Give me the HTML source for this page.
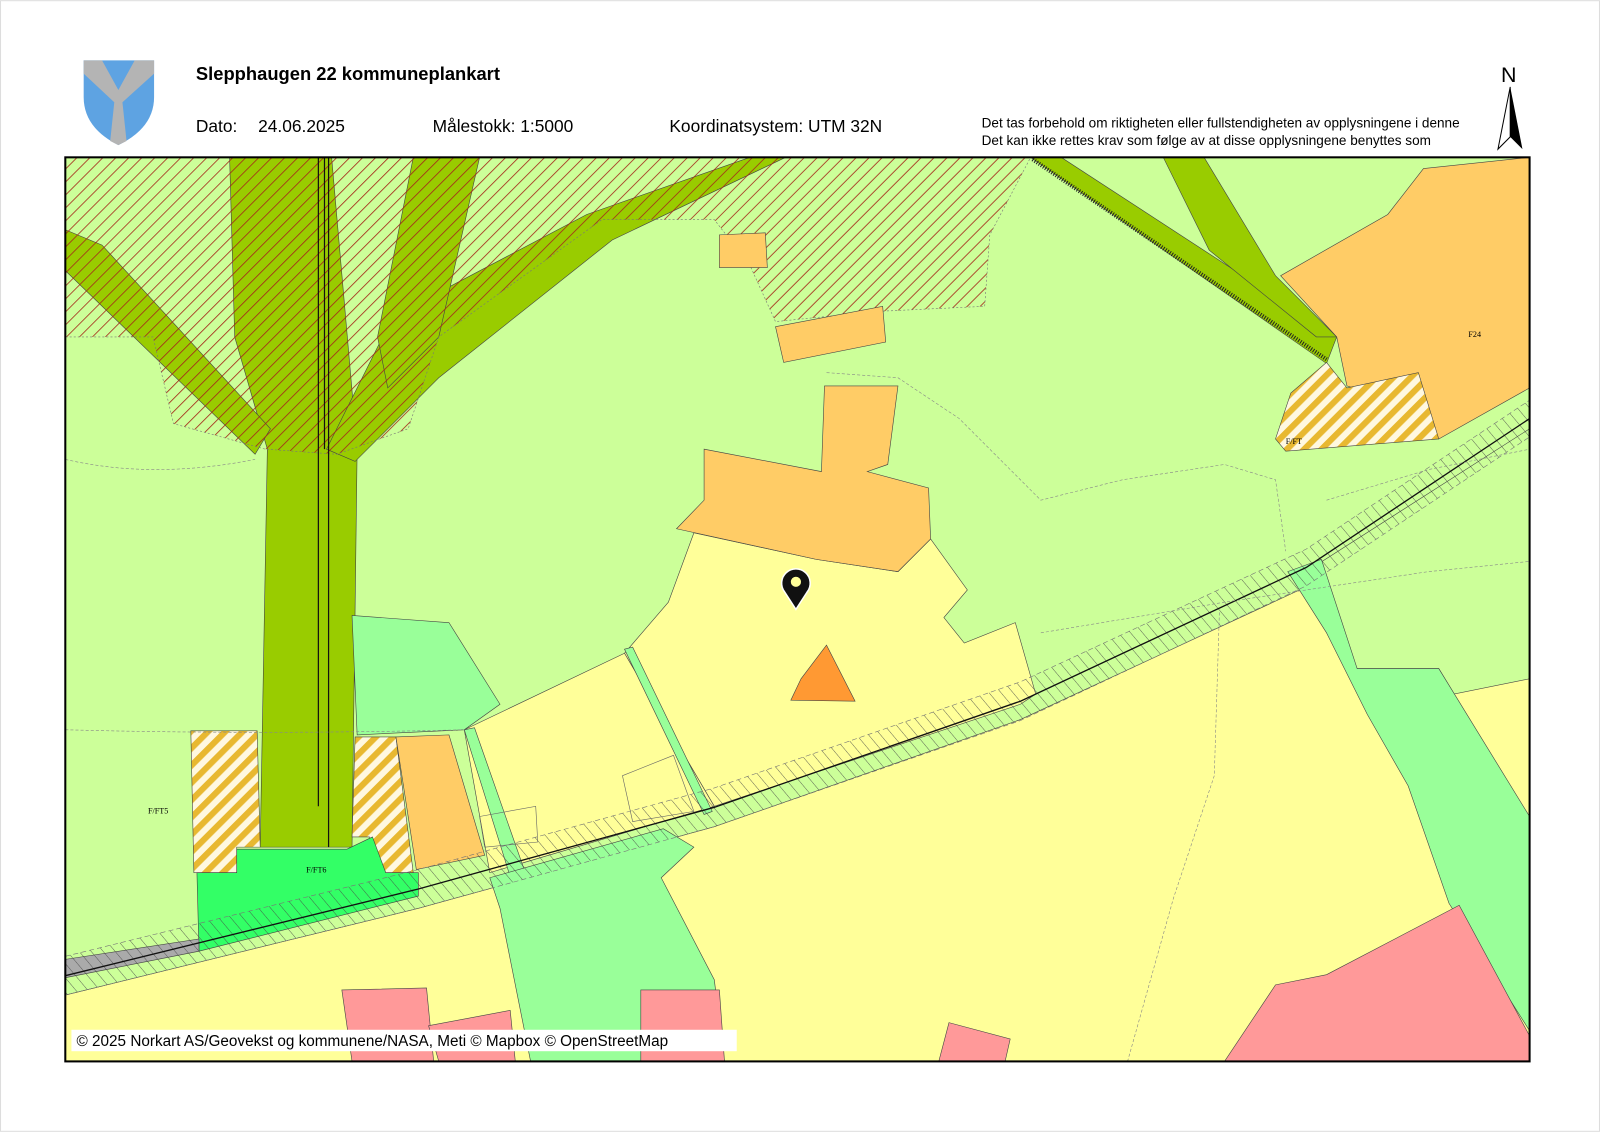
<!DOCTYPE html>
<html><head><meta charset="utf-8"><style>
html,body{margin:0;padding:0;background:#fff;width:1600px;height:1132px;overflow:hidden}
svg{display:block}
</style></head><body>
<svg width="1600" height="1132" viewBox="0 0 1568 1109" xmlns="http://www.w3.org/2000/svg" font-family="Liberation Sans, sans-serif">
<defs>
<pattern id="rh" patternUnits="userSpaceOnUse" width="9" height="9" patternTransform="rotate(45)"><rect width="9" height="9" fill="none"/><line x1="0" y1="0" x2="0" y2="9" stroke="#a52a1a" stroke-width="1.6"/></pattern>
<pattern id="yh" patternUnits="userSpaceOnUse" width="12" height="12" patternTransform="rotate(45)"><rect width="12" height="12" fill="#fff8e0"/><rect width="6" height="12" fill="#e8b830"/></pattern>
<pattern id="bh" patternUnits="userSpaceOnUse" width="9" height="9" patternTransform="rotate(-40)"><line x1="0" y1="0" x2="0" y2="9" stroke="#444" stroke-width="0.8"/></pattern>
<clipPath id="mc"><rect x="64" y="154" width="1435" height="886"/></clipPath>
</defs>
<rect x="0.5" y="0.5" width="1567" height="1108" fill="#fff" stroke="#ddd"/>
<!-- logo -->
<path d="M82 59 H151 V95 Q151 125 116 142 Q82 125 82 95 Z" fill="#5ea3e2"/>
<path d="M82 59 H100 L116 88 L132 59 H151 V72 L120 100 L124 138 Q116 142 116 142 L108 138 L112 100 L82 72 Z" fill="#b4b4b4"/>
<text x="192" y="78" font-size="18" font-weight="bold">Slepphaugen 22 kommuneplankart</text>
<text x="192" y="129" font-size="17">Dato:</text>
<text x="253" y="129" font-size="17">24.06.2025</text>
<text x="424" y="129" font-size="17">Målestokk:  1:5000</text>
<text x="656" y="129" font-size="17">Koordinatsystem:  UTM 32N</text>
<svg x="960" y="110" width="478" height="40"><text x="2" y="15" font-size="13.3">Det tas forbehold om riktigheten eller fullstendigheten av opplysningene i denne</text><text x="2" y="32" font-size="13.3">Det kan ikke rettes krav som følge av at disse opplysningene benyttes som</text></svg>
<text x="1471" y="80" font-size="21">N</text>
<path d="M1480 85 L1468 146 L1480 134 Z" fill="#fff" stroke="#000" stroke-width="1"/>
<path d="M1480 85 L1492 146 L1480 134 Z" fill="#000"/>
<!-- map -->
<g clip-path="url(#mc)" stroke="#444" stroke-width="0.6">
<rect x="64" y="154" width="1435" height="886" fill="#ccff99" stroke="none"/>
<path d="M225 154 L325 154 L350 440 L345 830 L255 830 L262 440 L230 330 Z" fill="#99cc00"/>
<path d="M64 225 L100 240 L265 420 L250 445 L64 265 Z" fill="#99cc00"/>
<path d="M320 440 L348 452 L430 370 L600 235 L770 154 L735 154 L575 210 L385 310 Z" fill="#99cc00"/>
<path d="M405 154 L470 154 L430 330 L380 380 L370 330 Z" fill="#99cc00"/>
<path d="M64 154 L1010 154 L970 230 L965 300 L860 305 L760 315 L735 260 L700 215 L590 215 L430 330 L400 420 L330 445 L260 440 L170 415 L150 330 L64 330 Z" fill="url(#rh)" stroke="#777" stroke-dasharray="2 2"/>
<path d="M1010 154 L1040 154 L1310 330 L1300 356 Z" fill="#99cc00"/>
<path d="M1012 156 L1300 352" stroke="#222" stroke-width="4" stroke-dasharray="1 1.5"/>
<path d="M1140 154 L1180 154 L1250 270 L1310 330 L1290 330 L1185 245 Z" fill="#99cc00"/>
<path d="M1395 165 L1499 154 L1499 380 L1410 430 L1390 400 L1320 378 L1310 330 L1255 270 L1360 210 Z" fill="#ffcc66"/>
<path d="M1250 430 L1265 385 L1300 355 L1320 380 L1390 365 L1410 430 L1260 442 Z" fill="url(#yh)"/>
<path d="M705 230 L750 228 L752 262 L705 262 Z" fill="#ffcc66"/>
<path d="M760 320 L865 300 L868 335 L768 355 Z" fill="#ffcc66"/>
<!-- south yellow -->
<path d="M64 975 L410 890 L700 810 L1000 705 L1280 575 L1499 430 L1499 1040 L64 1040 Z" fill="#ffff99"/>
<path d="M1280 560 L1499 420 L1499 665 L1425 680 L1410 655 L1330 655 L1300 600 Z" fill="#ccff99"/>
<path d="M680 522 L800 548 L880 560 L912 528 L948 578 L925 605 L945 630 L995 610 L1015 680 L1000 690 L700 790 L612 640 L655 590 Z" fill="#ffff99"/>
<path d="M612 640 L455 715 L480 855 L700 790 Z" fill="#ffff99"/>
<path d="M345 603 L440 610 L490 690 L455 715 L350 720 Z" fill="#99ff99"/>
<path d="M612 636 L620 634 L698 795 L690 798 Z" fill="#99ff99"/>
<path d="M808 378 L880 378 L870 455 L850 462 L910 478 L912 528 L880 560 L800 548 L663 518 L690 490 L690 440 L805 462 Z" fill="#ffcc66"/>
<path d="M810 632 L838 687 L775 686 L785 665 Z" fill="#ff9933"/>
<path d="M455 715 L465 713 L520 870 L505 875 Z" fill="#99ff99"/>
<path d="M480 860 L650 812 L680 830 L648 860 L700 960 L710 1040 L520 1040 L490 890 Z" fill="#99ff99"/>
<path d="M1262 560 L1295 548 L1330 655 L1410 655 L1499 800 L1499 1010 L1420 885 L1380 770 L1340 700 L1300 620 Z" fill="#99ff99"/>
<path d="M187 716 L252 716 L255 830 L232 830 L232 855 L190 855 Z" fill="url(#yh)"/>
<path d="M348 722 L388 722 L405 855 L378 855 L362 820 L345 820 Z" fill="url(#yh)"/>
<path d="M388 722 L440 720 L475 838 L408 852 Z" fill="#ffcc66"/>
<path d="M193 855 L232 855 L232 832 L340 832 L365 820 L378 855 L410 855 L410 878 L195 932 Z" fill="#33ff66"/>
<path d="M64 940 L195 920 L195 932 L64 958 Z" fill="#aaaaaa"/>
<path d="M335 970 L418 968 L425 1040 L345 1040 Z" fill="#ff9999"/>
<path d="M420 1005 L500 990 L505 1040 L430 1040 Z" fill="#ff9999"/>
<path d="M628 970 L705 970 L710 1040 L628 1040 Z" fill="#ff9999"/>
<path d="M930 1002 L990 1018 L985 1040 L920 1040 Z" fill="#ff9999"/>
<path d="M1200 1040 L1250 965 L1300 955 L1430 887 L1499 1015 L1499 1040 Z" fill="#ff9999"/>
<!-- road band -->
<path d="M64 937 L410 852 L700 772 L1000 668 L1280 538 L1499 392 L1499 428 L1280 574 L1000 706 L700 810 L410 890 L64 975 Z" fill="url(#bh)" stroke="#777" stroke-dasharray="5 3"/>
<path d="M64 956 L410 871 L700 791 L1000 687 L1280 556 L1499 410" fill="none" stroke="#111" stroke-width="1.3"/>
<!-- misc lines -->
<path d="M312 154 V790 M322 154 V830 M318 154 V440" stroke="#111" stroke-width="1.2" fill="none"/>
<path d="M64 450 Q150 470 250 450 M64 715 Q250 720 455 715 M810 365 L880 370 L940 410 L1020 490 L1100 470 L1200 455 L1250 470 L1260 540 M1300 490 L1400 460 L1499 440 M1020 620 L1200 590 L1400 560 L1499 550 M1195 600 L1190 760 L1150 880 L1105 1040" stroke="#888" stroke-dasharray="3 2" fill="none"/>
<path d="M470 800 L525 790 L527 825 L475 830 Z M610 760 L660 740 L680 795 L620 805 Z" fill="none" stroke="#666"/>
<text x="145" y="797" font-size="8" font-family="Liberation Serif, serif" stroke="none">F/FT5</text>
<text x="300" y="855" font-size="8" font-family="Liberation Serif, serif" stroke="none">F/FT6</text>
<text x="1260" y="435" font-size="8" font-family="Liberation Serif, serif" stroke="none">F/FT</text>
<text x="1439" y="330" font-size="8" font-family="Liberation Serif, serif" stroke="none">F24</text>
</g>
<rect x="64" y="154" width="1435" height="886" fill="none" stroke="#000" stroke-width="2"/>
<!-- pin -->
<path d="M780 597 L769 580 A14 14 0 1 1 791 580 Z" fill="#111" stroke="#fff" stroke-width="1.5"/>
<circle cx="780" cy="570" r="5" fill="#ffff99"/>
<rect x="70" y="1009" width="652" height="21" fill="#fff"/>
<text x="75" y="1025" font-size="15">© 2025 Norkart AS/Geovekst og kommunene/NASA, Meti © Mapbox © OpenStreetMap</text>
</svg>
</body></html>
